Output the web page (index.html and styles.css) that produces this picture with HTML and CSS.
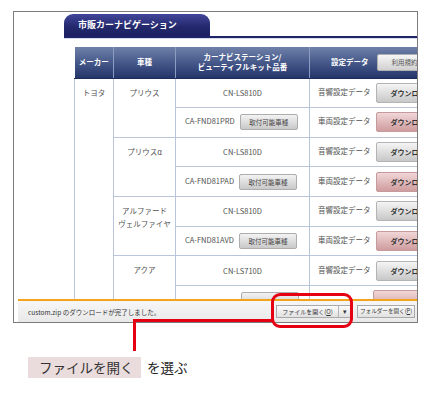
FILE: index.html
```html
<!DOCTYPE html>
<html lang="ja">
<head>
<meta charset="utf-8">
<title>市販カーナビゲーション</title>
<link rel="stylesheet" href="styles.css">
</head>
<body>
<div class="frame">
  <div class="tabbar"><div class="tab">市販カーナビゲーション</div></div>
  <table class="tbl">
    <colgroup>
      <col class="c-maker"><col class="c-car"><col class="c-navi"><col class="c-data">
    </colgroup>
    <thead>
      <tr>
        <th>メーカー</th>
        <th>車種</th>
        <th>カーナビステーション/<br>ビューティフルキット品番</th>
        <th class="th-data">設定データ<span class="btn-terms">利用規約</span></th>
      </tr>
    </thead>
    <tbody>
      <tr>
        <td class="maker" rowspan="8">トヨタ</td>
        <td class="car" rowspan="2">プリウス</td>
        <td>CN-LS810D</td>
        <td class="data">音響設定データ<span class="btn-dl">ダウンロー</span></td>
      </tr>
      <tr>
        <td class="kit">CA-FND81PRD<span class="btn-kit">取付可能車種</span></td>
        <td class="data">車両設定データ<span class="btn-dl pink">ダウンロー</span></td>
      </tr>
      <tr>
        <td class="car" rowspan="2">プリウスα</td>
        <td>CN-LS810D</td>
        <td class="data">音響設定データ<span class="btn-dl">ダウンロー</span></td>
      </tr>
      <tr>
        <td class="kit">CA-FND81PAD<span class="btn-kit">取付可能車種</span></td>
        <td class="data">車両設定データ<span class="btn-dl pink">ダウンロー</span></td>
      </tr>
      <tr>
        <td class="car two" rowspan="2">アルファード<br>ヴェルファイヤ</td>
        <td>CN-LS810D</td>
        <td class="data">音響設定データ<span class="btn-dl">ダウンロー</span></td>
      </tr>
      <tr>
        <td class="kit">CA-FND81AVD<span class="btn-kit">取付可能車種</span></td>
        <td class="data">車両設定データ<span class="btn-dl pink">ダウンロー</span></td>
      </tr>
      <tr>
        <td class="car" rowspan="2">アクア</td>
        <td>CN-LS710D</td>
        <td class="data">音響設定データ<span class="btn-dl">ダウンロー</span></td>
      </tr>
      <tr>
        <td class="kit hidden-row"><span class="btn-kit"></span></td>
        <td class="data hidden-row"><span class="btn-dl pink"></span></td>
      </tr>
    </tbody>
  </table>
  <div class="dlbar">
    <span class="dl-msg">custom.zip のダウンロードが完了しました。</span>
    <span class="dl-split"><span class="dl-btn open">ファイルを開く(<u>O</u>)</span><span class="dl-arrow">▾</span></span>
    <span class="dl-btn folder">フォルダーを開く(<u>P</u>)</span>
  </div>
</div>
<div class="callout-box"></div>
<div class="callout-h"></div>
<div class="callout-v"></div>
<div class="caption"><span class="cap-key">ファイルを開く</span><span class="cap-text">を選ぶ</span></div>
</body>
</html>
```

FILE: styles.css
```css
* { box-sizing: border-box; margin: 0; padding: 0; }
html, body { width: 430px; height: 400px; background: #fff; overflow: hidden; }
body {
  position: relative;
  font-family: "Noto Sans CJK JP", "Noto Sans", sans-serif;
  color: #444;
}

.frame {
  position: relative;
  margin: 11px 0 0 13px;
  width: 405px;
  height: 312px;
  border: 1px solid #7c7c7c;
  overflow: hidden;
  background: #fff;
}

.tabbar {
  margin: 2px 0 0 50px;
  border-bottom: 2px solid #1f2468;
  box-shadow: 0 1px 0 #d9dce8;
}
.tab {
  width: 146px;
  height: 22px;
  border-radius: 9px 9px 0 0;
  background: linear-gradient(#42469a, #23286c 60%, #1c2062);
  color: #fff;
  font-size: 9px;
  font-weight: bold;
  line-height: 22px;
  padding-left: 14px;
}

.tbl {
  margin: 9px 0 0 60px;
  border-collapse: collapse;
  table-layout: fixed;
  width: 390px;
}
.c-maker { width: 39px; }
.c-car { width: 62px; }
.c-navi { width: 134px; }
.c-data { width: 155px; }

.tbl th {
  height: 31px;
  background: linear-gradient(#6f80a8, #46598a 50%, #24356a);
  color: #fff;
  font-size: 7.5px;
  font-weight: bold;
  line-height: 10px;
  text-align: center;
  border-left: 1px solid #8c9cc0;
  border-bottom: 1px solid #1e2a5a;
  white-space: nowrap;
}
.tbl th:first-child { border-left: none; }
.tbl th.th-data { text-align: left; padding-left: 21px; }
.btn-terms {
  display: inline-block;
  vertical-align: middle;
  margin-left: 8px;
  width: 62px;
  height: 17px;
  line-height: 15px;
  padding-left: 14px;
  background: linear-gradient(#f6f6f6, #d0d0d0);
  border: 1px solid #b0b0b0;
  border-radius: 2px;
  color: #555;
  font-weight: normal;
  font-size: 6.5px;
}

.tbl td {
  height: 29.67px;
  border: 1px solid #b9c5da;
  font-size: 7.5px;
  line-height: 12px;
  text-align: center;
  vertical-align: middle;
  color: #505050;
  white-space: nowrap;
}
.tbl td.maker, .tbl td.car {
  vertical-align: top;
  padding-top: 8px;
}
.tbl td.car.two { padding-top: 7px; line-height: 13px; }
.tbl td.kit { text-align: left; padding-left: 9px; }
.tbl td.kit.hidden-row { padding-left: 60px; }
.tbl td.data {
  text-align: left;
  padding-left: 8px;
  border-left: 1px solid #5f74a6;
}
.tbl td.data.hidden-row { padding-left: 58px; }

.btn-kit {
  display: inline-block;
  vertical-align: middle;
  margin-left: 5px;
  width: 58px;
  height: 16px;
  line-height: 14px;
  text-align: center;
  background: linear-gradient(#f3f3f3, #c9c9c9);
  border: 1px solid #adadad;
  border-radius: 2px;
  font-size: 6.5px;
  color: #444;
}
.btn-dl {
  display: inline-block;
  vertical-align: middle;
  margin-left: 5px;
  width: 80px;
  height: 20px;
  line-height: 18px;
  padding-left: 14px;
  background: linear-gradient(#f5f5f5, #c8c8c8);
  border: 1px solid #b4b4b4;
  border-radius: 2px;
  font-weight: bold;
  font-size: 7px;
  color: #333;
}
.btn-dl.pink {
  background: linear-gradient(#f1d6d7, #cf9c9e);
  border-color: #c59b9d;
}

.dlbar {
  position: absolute;
  left: 4px;
  right: 0;
  bottom: 0;
  height: 23px;
  border-top: 2px solid #f2a41c;
  background: linear-gradient(#f6f6f6, #e9e9e9);
  display: flex;
  align-items: center;
  padding-left: 10px;
  font-size: 6.5px;
  color: #333;
}
.dl-msg { flex: 1; }
.dl-split {
  display: flex;
  height: 13px;
  border: 1px solid #a9a9a9;
  background: linear-gradient(#fbfbfb, #e1e1e1);
  margin-right: 6px;
  font-size: 6px;
}
.dl-btn { line-height: 11px; text-decoration: none; white-space: nowrap; }
.dl-btn u { text-decoration: underline; }
.dl-btn.open { width: 62px; text-align: center; border-right: 1px solid #b4b4b4; }
.dl-arrow { width: 11px; text-align: center; font-size: 7px; line-height: 11px; }
.dl-btn.folder {
  display: block;
  width: 58px;
  height: 13px;
  margin-right: 2px;
  border: 1px solid #a9a9a9;
  background: linear-gradient(#fbfbfb, #e1e1e1);
  text-align: center;
  font-size: 5.6px;
  overflow: hidden;
}

.callout-box {
  position: absolute;
  left: 271px;
  top: 293px;
  width: 82px;
  height: 35px;
  border: 3px solid #e50012;
  border-radius: 9px;
}
.callout-h {
  position: absolute;
  left: 133px;
  top: 319px;
  width: 139px;
  height: 3px;
  background: #e50012;
}
.callout-v {
  position: absolute;
  left: 133px;
  top: 319px;
  width: 3px;
  height: 32px;
  background: #e50012;
}

.caption {
  display: flex;
  align-items: center;
  margin: 34px 0 0 28px;
}
.cap-key {
  width: 113px;
  height: 21px;
  background: #eadcdc;
  color: #333;
  font-size: 13.5px;
  line-height: 21px;
  padding-left: 11px;
  white-space: nowrap;
}
.cap-text {
  margin-left: 6px;
  font-size: 13.5px;
  color: #222;
  line-height: 21px;
}
```
